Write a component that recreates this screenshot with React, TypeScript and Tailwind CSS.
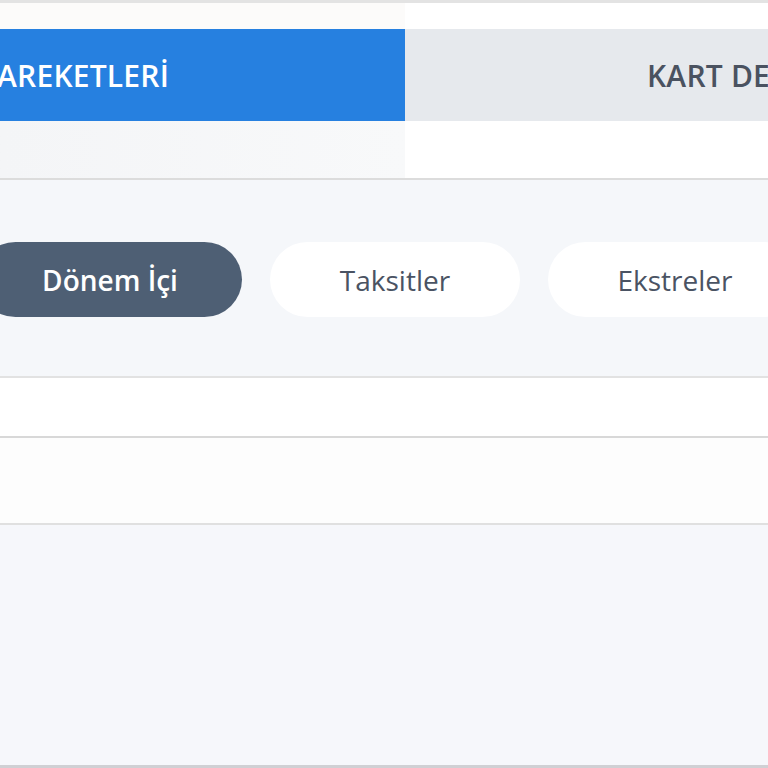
import React from 'react';

const pills = [
  { label: 'Dönem İçi', active: true, width: 'w-[264px]' },
  { label: 'Taksitler', active: false, width: 'w-[250px]' },
  { label: 'Ekstreler', active: false, width: 'w-[254px]' },
];

export default function App() {
  return (
    <div
      className="w-[768px] h-[768px] overflow-hidden bg-[#f6f7fb] flex flex-col"
      style={{ fontFamily: '"Open Sans", "Noto Sans", sans-serif' }}
    >
      {/* üst boşluk */}
      <div className="h-[29px] shrink-0 border-t-[3px] border-[#e3e3e3] flex">
        <div className="w-[405px] bg-[#fcfbfa]" />
        <div className="flex-1 bg-white" />
      </div>

      {/* sekmeler */}
      <div className="h-[92px] shrink-0 flex">
        <div className="w-[405px] bg-[#2680e0] flex items-center justify-end pr-[236px] overflow-hidden whitespace-nowrap">
          <span className="text-[30px] font-semibold text-white tracking-[0.2px]">KART HAREKETLERİ</span>
        </div>
        <div className="flex-1 bg-[#e6e9ed] flex items-center pl-[242px] overflow-hidden whitespace-nowrap">
          <span className="text-[30px] font-semibold text-[#4a5260] tracking-[0.2px]">KART DETAYLARI</span>
        </div>
      </div>

      <div className="h-[59px] shrink-0 flex border-b-2 border-[#dcdcdc]">
        <div className="w-[405px] bg-gradient-to-r from-[#f4f5f7] to-[#f8f9fa]" />
        <div className="flex-1 bg-white" />
      </div>

      {/* dönem seçimi */}
      <div className="h-[198px] shrink-0 bg-[#f5f7fa] flex items-center border-b-2 border-[#e2e2e2]">
        <div className="flex gap-[28px] ml-[-22px] mt-[3px]">
          {pills.map((p) => (
            <div
              key={p.label}
              className={`${p.width} h-[75px] shrink-0 rounded-full flex items-center justify-center text-[28px] ${
                p.active ? 'bg-[#4e5f74] text-white font-semibold' : 'bg-white text-[#4a5363] font-medium'
              }`}
            >
              {p.label}
            </div>
          ))}
        </div>
      </div>

      <div className="h-[60px] shrink-0 bg-white border-b-2 border-[#d8d8d8]" />
      <div className="h-[87px] shrink-0 bg-[#fdfdfd] border-b-2 border-[#e0e0e0]" />

      <div className="flex-1 bg-[#f6f7fb] border-b-[3px] border-[#d0d0d4]" />
    </div>
  );
}
